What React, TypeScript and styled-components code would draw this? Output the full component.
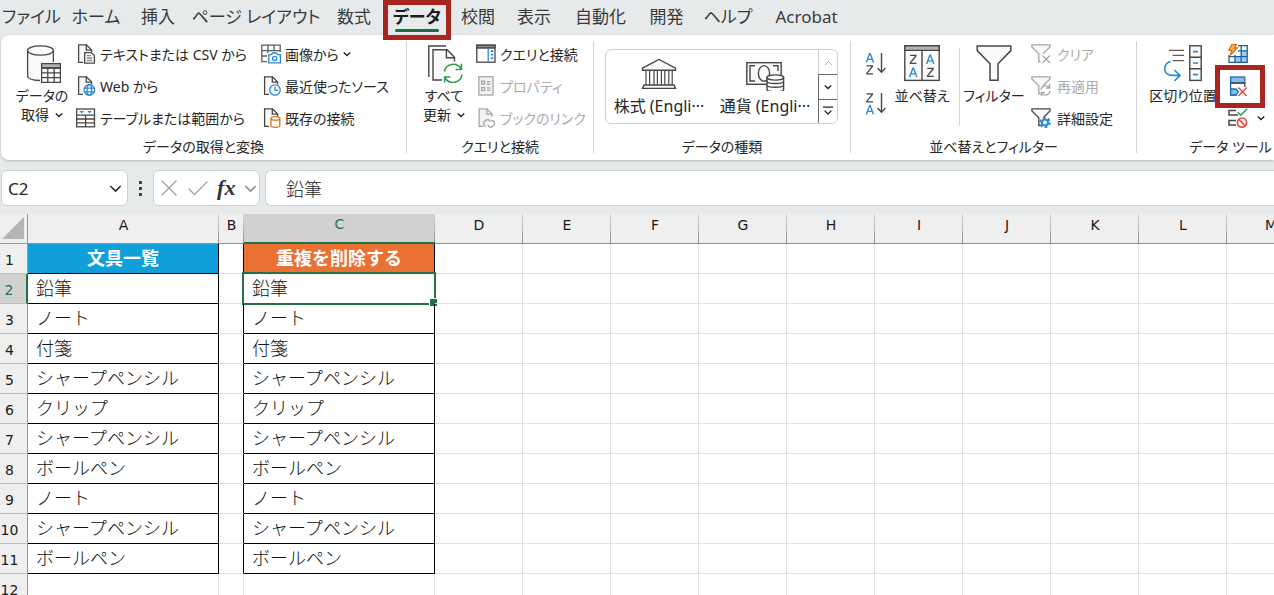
import React from "react";
import styled, { createGlobalStyle, css } from "styled-components";

const uiFont = `"Noto Sans", "Noto Sans CJK JP", sans-serif`;
const ink = "#262626";
const green = "#217346";
const red = "#a9251f";

const GlobalStyle = createGlobalStyle`
  * { box-sizing: border-box; }
  body {
    margin: 0;
    background: #e6eaeb;
    color: ${ink};
    font-family: ${uiFont};
    overflow: hidden;
  }
  button, input {
    font: inherit;
    color: inherit;
    background: none;
    border: 0;
    margin: 0;
    padding: 0;
  }
  svg { display: block; flex: none; }
`;

const Window = styled.div`
  display: flex;
  flex-direction: column;
  width: 100%;
  height: 100vh;
  overflow: hidden;
`;

/* ---------- tabs ---------- */

const TabBar = styled.nav`
  display: flex;
  height: 35px;
  flex: none;
  font-feature-settings: "palt";
`;

const Tab = styled.button<{ $width: number; $active?: boolean }>`
  position: relative;
  flex: 0 0 ${(p) => p.$width}px;
  height: 34px;
  font-size: 17px;
  line-height: 34px;
  white-space: nowrap;
  font-weight: ${(p) => (p.$active ? 700 : 400)};
  color: ${(p) => (p.$active ? "#1c1c1c" : "#3a3a3a")};
  ${(p) =>
    p.$active &&
    css`
      &::after {
        content: "";
        position: absolute;
        left: 12px;
        right: 12px;
        bottom: 2px;
        height: 3px;
        border-radius: 2px;
        background: #127245;
      }
    `}
`;

/* Red frame drawn over a control that the tutorial points at. */
const Highlight = styled.span<{ $inset: string }>`
  position: absolute;
  z-index: 2;
  inset: ${(p) => p.$inset};
  border: 5px solid ${red};
  pointer-events: none;
`;

/* ---------- ribbon ---------- */

const Ribbon = styled.section`
  display: flex;
  flex: none;
  height: 125px;
  margin-left: 1px;
  padding-top: 4px;
  background: #fff;
  border-radius: 8px 0 0 8px;
  box-shadow: 0 1px 3px rgba(0, 0, 0, 0.22);
`;

const Group = styled.div<{ $width: number }>`
  display: flex;
  flex-direction: column;
  flex: 0 0 ${(p) => p.$width}px;
`;

const GroupBody = styled.div<{ $indent: number }>`
  display: flex;
  height: 96px;
  padding-left: ${(p) => p.$indent}px;
`;

const GroupLabel = styled.div`
  height: 24px;
  font-size: 14px;
  line-height: 24px;
  text-align: center;
  white-space: nowrap;
  font-feature-settings: "palt";
`;

const Divider = styled.div`
  flex: 0 0 1px;
  margin: 2px 0 7px;
  background: #d4d4d4;
`;

const InnerDivider = styled(Divider)`
  margin: 9px 4px 9px 3px;
`;

const BigButton = styled.button<{ $width: number }>`
  display: flex;
  flex-direction: column;
  align-items: center;
  gap: 3px;
  flex: 0 0 ${(p) => p.$width}px;
  min-width: 0;
  padding-top: 6px;
  font-size: 14px;
  line-height: 19px;
  white-space: nowrap;
  font-feature-settings: "palt";
`;

const BigLabel = styled.span`
  display: flex;
  flex-direction: column;
  align-items: center;
`;

const WithChevron = styled.span`
  display: flex;
  align-items: center;
  gap: 6px;
`;

const CommandList = styled.div<{ $width?: number; $indent?: number }>`
  display: flex;
  flex-direction: column;
  align-items: flex-start;
  flex: 0 0 ${(p) => (p.$width ? p.$width + "px" : "auto")};
  padding-left: ${(p) => p.$indent ?? 0}px;
`;

const Command = styled.button<{ $gap?: number }>`
  position: relative;
  display: flex;
  align-items: center;
  gap: ${(p) => p.$gap ?? 4}px;
  height: 32px;
  padding-bottom: 2px;
  font-size: 14px;
  white-space: nowrap;
  font-feature-settings: "palt";
  &:disabled {
    color: #ababab;
  }
`;

const SortColumn = styled.div`
  display: flex;
  flex-direction: column;
  align-items: center;
  flex: 0 0 24px;
  gap: 16px;
  padding-top: 13px;
`;

const Gallery = styled.div`
  display: flex;
  flex: 0 0 233px;
  height: 75px;
  margin-top: 10px;
  border: 1px solid #cfcfcf;
  border-radius: 6px;
  overflow: hidden;
`;

const GalleryItem = styled.button`
  display: flex;
  flex-direction: column;
  align-items: center;
  gap: 3px;
  flex: 0 0 106px;
  min-width: 0;
  padding-top: 7px;
  font-size: 16px;
  line-height: 24px;
  white-space: nowrap;
`;

const Spinner = styled.div`
  display: flex;
  flex-direction: column;
  flex: 1;
`;

const SpinButton = styled.button`
  display: flex;
  align-items: center;
  justify-content: center;
  flex: 1;
  border: 1px solid #6b6b6b;
  margin: 0 -1px -1px 0;
  &:disabled {
    border-color: #cfcfcf;
    border-top-color: transparent;
  }
`;

/* ---------- formula bar ---------- */

const FormulaBar = styled.div`
  display: flex;
  flex: none;
  height: 36px;
  margin: 10px 0 8px 1px;
`;

const Field = styled.div`
  display: flex;
  align-items: center;
  min-width: 0;
  background: #fff;
  border: 1px solid #cdd0d1;
  border-radius: 6px;
`;

const NameBox = styled(Field)`
  flex: 0 0 127px;
  padding: 0 5px 0 6px;
`;

const NameInput = styled.input`
  flex: 1;
  width: 0;
  min-width: 0;
  font-size: 17px;
  outline: none;
`;

const Dots = styled.div`
  display: flex;
  flex-direction: column;
  align-items: center;
  justify-content: center;
  gap: 3px;
  flex: 0 0 25px;
`;

const Dot = styled.i`
  width: 3px;
  height: 3px;
  background: #444;
`;

const FxBox = styled(Field)`
  flex: 0 0 107px;
  justify-content: space-between;
  padding: 0 2px 0 6px;
  margin-right: 5px;
`;

const FxButton = styled.button`
  font: italic 700 22px "Liberation Serif", serif;
  line-height: 30px;
  color: #333;
`;

const FormulaField = styled(Field)`
  flex: 1;
  border-right: 0;
  border-radius: 6px 0 0 6px;
`;

const FormulaInput = styled.input`
  width: 100%;
  padding: 0 20px;
  font: 300 18px "Noto Sans CJK JP", sans-serif;
  line-height: 26px;
  outline: none;
`;

/* ---------- sheet ---------- */

const Sheet = styled.main`
  flex: 1;
  min-height: 0;
  overflow: hidden;
  background: #fff;
`;

const Table = styled.table`
  width: 0;
  table-layout: fixed;
  border-spacing: 0;
  border-collapse: separate;
`;

const Col = styled.col<{ $width: number }>`
  width: ${(p) => p.$width}px;
`;

const Corner = styled.td`
  height: 30px;
  padding: 0 3px 4px 0;
  background: #efefef;
  border-right: 1px solid #999;
  border-bottom: 1px solid #999;
  vertical-align: bottom;
  svg { margin-left: auto; }
`;

const ColumnHead = styled.th<{ $selected?: boolean }>`
  height: 30px;
  padding: 0 0 8px;
  font: 400 14px "DejaVu Sans", sans-serif;
  color: ${(p) => (p.$selected ? green : "#1a1a1a")};
  background: linear-gradient(#d8d8d8, #8f8f8f) right / 1px 100% no-repeat,
    ${(p) => (p.$selected ? "#d1d1d1" : "#efefef")};
  border-bottom: ${(p) => (p.$selected ? `2px solid ${green}` : "1px solid #8f8f8f")};
`;

const RowHead = styled.th<{ $selected?: boolean }>`
  height: 30px;
  padding: 2px 8px 0 0;
  font: 400 14px "DejaVu Sans", sans-serif;
  color: ${(p) => (p.$selected ? green : "#1a1a1a")};
  background: ${(p) => (p.$selected ? "#d1d1d1" : "#efefef")};
  border-bottom: 1px solid #bdbdbd;
  border-right: ${(p) => (p.$selected ? `2px solid ${green}` : "1px solid #999")};
`;

const Cell = styled.td<{ $right?: boolean; $bottom?: boolean; $fill?: string }>`
  position: relative;
  height: 30px;
  padding: 0 0 3px 8px;
  font: 300 18px "Noto Sans CJK JP", sans-serif;
  line-height: 26px;
  white-space: nowrap;
  color: #111;
  border-right: 1px solid ${(p) => (p.$right ? "#000" : "#e1e1e1")};
  border-bottom: 1px solid ${(p) => (p.$bottom ? "#000" : "#e1e1e1")};
  ${(p) =>
    p.$fill &&
    css`
      padding-left: 0;
      text-align: center;
      font-weight: 700;
      color: #fff;
      background: ${p.$fill};
    `}
`;

const Selection = styled.span`
  position: absolute;
  inset: -2px;
  border: 2px solid ${green};
  &::after {
    content: "";
    position: absolute;
    right: -4px;
    bottom: -4px;
    width: 7px;
    height: 7px;
    background: ${green};
    border: 1px solid #fff;
  }
`;

/* ---------- icons ---------- */

const g = "#484644";
const blue = "#2b88d8";

const Chevron = ({ size = 8, color = ink, w = 1.4 }: { size?: number; color?: string; w?: number }) => (
  <svg width={size} height={size} viewBox="0 0 8 8" fill="none" stroke={color} strokeWidth={w}>
    <path d="M0.8 2.4 4 5.6 7.2 2.4" />
  </svg>
);

const Small = ({ children }: { children: React.ReactNode }) => (
  <svg width="20" height="20" viewBox="0 0 20 20" fill="none" stroke={g} strokeWidth="1.3">
    {children}
  </svg>
);

const Page = ({ color = g, fill = "#fafafa" }: { color?: string; fill?: string }) => (
  <>
    <path d="M7 18.3H2.6V.8H10.5L15.6 6V8.5" fill={fill} stroke={color} />
    <path d="M10.3.8V6.2H15.6" stroke={color} />
  </>
);

const DatabaseIcon = () => (
  <svg width="38" height="38" viewBox="0 0 38 38" fill="none" stroke={g} strokeWidth="1.3">
    <path d="M4.6 5.5V31c0 2.6 5 4.4 12 4.4V18H30.4V5.5" fill="#fafafa" stroke="none" />
    <path d="M4.6 5.5V31c0 2.4 4.6 4.2 12.4 4.5M30.4 5.5V17" />
    <ellipse cx="17.5" cy="5.5" rx="12.9" ry="4.7" fill="#fafafa" />
    <rect x="18.6" y="18.6" width="18.8" height="18.8" fill="#fff" />
    <path d="M18.6 18.6H37.4V23H18.6Z" fill="#b5b3b1" />
    <path d="M18.6 23H37.4M18.6 27.8H37.4M18.6 32.6H37.4M24.8 23V37.4M31.2 23V37.4" />
  </svg>
);

const TextIcon = () => (
  <Small>
    <Page />
    <path d="M8.7 8.6H15L18.4 11.5V19.2H8.7Z" fill="#fff" />
    <path d="M10.8 11.6H15M10.8 14H16.3M10.8 16.5H16.3" stroke="#8a8886" />
  </Small>
);

const WebIcon = () => (
  <Small>
    <Page />
    <circle cx="13.3" cy="14" r="5.3" fill="#fff" stroke={blue} />
    <ellipse cx="13.3" cy="14" rx="2.3" ry="5.3" stroke={blue} />
    <path d="M8.2 12.2H18.4M8.2 15.8H18.4" stroke={blue} />
  </Small>
);

const TableIcon = () => (
  <Small>
    <rect x=".7" y="1" width="17.8" height="17.8" fill="#fff" />
    <path d="M3.4 3H8L5.7 5.6ZM11.3 3H15.9L13.6 5.6Z" fill={blue} stroke="none" />
    <path d="M.7 7.2H18.5M.7 11H18.5M.7 14.9H18.5M9.6 7.2V18.8" />
  </Small>
);

const PictureIcon = () => (
  <Small>
    <path d="M19.2 8V1.2H.8V17.6H6M.8 6.6H19.2M.8 12H6M6.9 1.2V9M13.1 1.2V7.4" stroke="#605e5c" />
    <path d="M7.8 10.6H10.5L11.7 9H15.4L16.6 10.6H19.4V18.8H7.8Z" fill="#fff" stroke={blue} />
    <circle cx="13.6" cy="14.4" r="2.1" stroke={blue} />
  </Small>
);

const RecentIcon = () => (
  <Small>
    <g transform="translate(1 0)">
      <Page />
      <circle cx="13" cy="14" r="5.2" fill="#fff" stroke={blue} />
      <path d="M13 10.8V14.4H16" stroke={blue} />
    </g>
  </Small>
);

const ExistingIcon = () => (
  <Small>
    <g transform="translate(1 0)">
      <Page />
      <path d="M9 10.4V17.8c0 2 8.8 2 8.8 0V10.4" fill="#fff" stroke="#d8730f" />
      <ellipse cx="13.4" cy="10.4" rx="4.4" ry="1.8" fill="#fff" stroke="#d8730f" />
    </g>
  </Small>
);

const RefreshIcon = () => (
  <svg width="38" height="38" viewBox="0 0 38 38" fill="none" stroke={g} strokeWidth="1.4">
    <path d="M3.8 32V1H21" />
    <path d="M17 35H8V4.8H22L29.5 12.3V16.5" fill="#fafafa" />
    <path d="M21.4 4.8V12.8H30" />
    <g stroke="#2f9b4c" strokeWidth="1.5">
      <path d="M19.4 26.5A9 8.6 0 0 1 36 23.5M36.4 18.8V24.6H30.6" />
      <path d="M37 29.5A9 8.6 0 0 1 20.2 33M19.6 37.5V32H25.4" />
    </g>
  </svg>
);

const QueriesIcon = () => (
  <Small>
    <rect x=".8" y="1.2" width="18.2" height="17" fill="#fff" />
    <path d="M.8 1.2H19V4H.8Z" fill="#8a8886" />
    <path d="M12.2 4.6V17.6" stroke={blue} />
    <path d="M14.8 7H17.2M14.8 10.6H17.2M14.8 14.2H17.2" stroke={blue} strokeWidth="1.8" />
  </Small>
);

const PropertiesIcon = () => (
  <Small>
    <g stroke="#a6a6a6">
      <rect x="2.8" y=".8" width="14.2" height="18.2" fill="#f3f3f3" />
      <rect x="5.6" y="5.2" width="3" height="3" />
      <rect x="5.6" y="11.6" width="3" height="3" />
      <path d="M11 5.6H14.4M11 8H14.4M11 12H14.4M11 14.4H14.4" />
    </g>
  </Small>
);

const LinkIcon = () => (
  <Small>
    <g transform="translate(.5 0)">
      <Page color="#a6a6a6" fill="#f3f3f3" />
      <path
        d="M9.6 18.3a2.8 2.8 0 0 1-1.8-4.6l1.8-1.6c2-1.2 4 0 4.2 2M14.6 12.6a2.8 2.8 0 0 1 3 4.2l-1.8 1.8c-2 1.2-4.2 0-4.2-2"
        stroke="#a6a6a6"
      />
    </g>
  </Small>
);

const BankIcon = () => (
  <svg width="36" height="34" viewBox="0 0 36 34" fill="none" stroke={g} strokeWidth="1.4">
    <path d="M1.5 11.2 18 2.5 34.5 11.2V13.2H1.5Z" fill="#fafafa" />
    <path d="M5 13.2V28M8.6 13.2V28M13 13.2V28M16.4 13.2V28M20.4 13.2V28M23.8 13.2V28M27.8 13.2V28M31.2 13.2V28" strokeWidth="1.2" />
    <path d="M3 28H33L34.5 31.4H1.5Z" fill="#fafafa" />
  </svg>
);

const MoneyIcon = () => (
  <svg width="40" height="34" viewBox="0 0 40 34" fill="none" stroke={g} strokeWidth="1.4">
    <rect x="1.8" y="5.7" width="34.4" height="21.6" fill="#fafafa" />
    <path d="M10 8.8H5V24H10M28 8.8H33V14" />
    <ellipse cx="19" cy="16.4" rx="5.6" ry="7.8" />
    <path d="M22 20.5V32.5c0 3 16.6 3 16.6 0V20.5Z" fill="#fff" />
    <ellipse cx="30.3" cy="20.5" rx="8.3" ry="2.6" fill="#fff" />
    <path d="M22 24.3c0 3 16.6 3 16.6 0M22 28c0 3 16.6 3 16.6 0" />
  </svg>
);

const A = ({ x, y }: { x: number; y: number }) => (
  <path transform={`translate(${x} ${y})`} d="M.3 9.4 3.6.6H4.2L7.5 9.4M1.6 6.4H6.2" stroke={blue} strokeWidth="1.4" />
);
const Z = ({ x, y }: { x: number; y: number }) => (
  <path transform={`translate(${x} ${y})`} d="M.6.8H6.4V1.4L.9 8.2V8.8H7" stroke={g} strokeWidth="1.3" />
);

const SortIcon = ({ desc }: { desc?: boolean }) => (
  <svg width="22" height="24" viewBox="0 0 22 24" fill="none">
    {desc ? <Z x={1} y={1} /> : <A x={1} y={1} />}
    {desc ? <A x={1} y={13} /> : <Z x={1} y={13} />}
    <path d="M16.5 1V20M12.5 16 16.5 20.2 20.5 16" stroke={g} strokeWidth="1.4" />
  </svg>
);

const SortDialogIcon = () => (
  <svg width="36" height="38" viewBox="0 0 36 38" fill="none" stroke={g} strokeWidth="1.4">
    <rect x=".8" y=".8" width="34.4" height="34.6" fill="#fafafa" />
    <path d="M.8.8H35.2V5.4H.8Z" fill="#b5b3b1" />
    <path d="M18 5.4V35.4" />
    <Z x={5.5} y={9.5} />
    <A x={5.3} y={22.5} />
    <A x={22.3} y={9.5} />
    <Z x={22.7} y={22.5} />
  </svg>
);

const FunnelIcon = () => (
  <svg width="36" height="38" viewBox="0 0 36 38" fill="none" stroke={g} strokeWidth="1.5">
    <path d="M1.2 1H34.8V5.6L22 18.8V35.2H14V18.8L1.2 5.6Z" fill="#fafafa" />
  </svg>
);

const SmallFunnel = ({ color = g }: { color?: string }) => (
  <path d="M9.6 17.5H7.8V9.8L.9 3V.9H19V3L12.2 9.8" fill="#f8f8f8" stroke={color} />
);

const ClearIcon = () => (
  <Small>
    <SmallFunnel color="#a6a6a6" />
    <path d="M11.5 11.5 19 19M19 11.5 11.5 19" stroke="#a6a6a6" />
  </Small>
);

const ReapplyIcon = () => (
  <Small>
    <SmallFunnel color="#a6a6a6" />
    <path d="M10 13.5a4.8 4.6 0 0 1 8.4-2M18.6 8V12H14.8M19 15a4.8 4.6 0 0 1-8.2 2.6M10.4 20V16.6H14" stroke="#a6a6a6" />
  </Small>
);

const AdvancedIcon = () => (
  <Small>
    <SmallFunnel />
    <circle cx="14" cy="14.5" r="4.8" stroke={blue} strokeWidth="2" strokeDasharray="2.6 2.4" />
    <circle cx="14" cy="14.5" r="3" fill="#fff" stroke={blue} strokeWidth="2" />
  </Small>
);

const SplitIcon = () => (
  <svg width="40" height="38" viewBox="0 0 40 38" fill="none" stroke={g} strokeWidth="1.4">
    <path d="M6 5.4H21M9.5 10.4H21M9.5 15.6H21" stroke="#605e5c" />
    <path d="M7.6 16.4C-.5 19-.5 29.5 9 30.4H16M11.4 25 17 30.4 11.4 36" stroke={blue} strokeWidth="1.6" />
    <rect x="26.8" y=".8" width="11.4" height="34.6" fill="#fafafa" />
    <path d="M26.8 12.3H38.2M26.8 23.8H38.2" />
    <path d="M30 6.6H35M30 18H35M30 29.6H35" stroke={blue} strokeWidth="1.6" />
  </svg>
);

const FlashIcon = () => (
  <Small>
    <path d="M13 6.6H19.2V18.4H7V12.4H13Z" fill="#9fcdf3" stroke="none" />
    <path d="M10 6.8H19.2M1 12.6H19.2M7 11V18.4M13.2 1.6V18.4M10 1.6H19.2V18.4H1V11" stroke="#1f5f99" />
    <path d="M3.8.6H8.6L6.6 4H9.4L2.2 11.4 3.8 6.4H.8Z" fill="#f9b26a" stroke="#d8730f" />
  </Small>
);

const DuplicatesIcon = () => (
  <Small>
    <rect x="2.6" y="1" width="14.2" height="6" fill="#83bdf0" stroke="#1f6cb0" />
    <path d="M2.6 7V19H9" stroke="#1f5f99" />
    <path d="M2.6 7H16.8V11" stroke={g} />
    <path d="M2.6 13H8L10.4 15.6 8 19H2.6Z" fill="#83bdf0" stroke="#1f6cb0" />
    <path d="M10.4 11.6 18.6 20M18.6 11.6 10.4 20" stroke="#e8443a" strokeWidth="1.4" />
  </Small>
);

const ValidationIcon = () => (
  <Small>
    <path d="M8 2.6H1V7H10M8 12.6H1V17H8" strokeWidth="1.5" />
    <path d="M9.6 4 12.8 7.2 19.2.8" stroke="#2f9b4c" strokeWidth="1.6" />
    <circle cx="14" cy="14.6" r="4.6" stroke="#e8443a" strokeWidth="1.6" />
    <path d="M10.8 11.4 17.2 17.8" stroke="#e8443a" strokeWidth="1.6" />
  </Small>
);

/* ---------- data ---------- */

const tabs: [string, number][] = [
  ["ファイル", 63],
  ["ホーム", 66],
  ["挿入", 58],
  ["ページ レイアウト", 138],
  ["数式", 58],
  ["データ", 68],
  ["校閲", 54],
  ["表示", 58],
  ["自動化", 75],
  ["開発", 57],
  ["ヘルプ", 66],
  ["Acrobat", 91],
];

const columns: [string, number][] = [
  ["A", 191],
  ["B", 25],
  ["C", 191],
  ...["D", "E", "F", "G", "H", "I", "J", "K", "L", "M"].map((c): [string, number] => [c, 88]),
];

const items = [
  "",
  "鉛筆",
  "ノート",
  "付箋",
  "シャープペンシル",
  "クリップ",
  "シャープペンシル",
  "ボールペン",
  "ノート",
  "シャープペンシル",
  "ボールペン",
  "",
];

const SheetCell = ({ col, row }: { col: string; row: number }) => {
  const inList = row <= 11;
  const listed = col === "A" || col === "C";
  if (row === 1 && listed) {
    return (
      <Cell $right $bottom $fill={col === "A" ? "#119fd9" : "#e97132"}>
        {col === "A" ? "文具一覧" : "重複を削除する"}
      </Cell>
    );
  }
  return (
    <Cell $right={inList && (listed || col === "B")} $bottom={inList && listed}>
      {listed && items[row - 1]}
      {col === "C" && row === 2 && <Selection />}
    </Cell>
  );
};

export default function App() {
  return (
    <Window>
      <GlobalStyle />
      <TabBar aria-label="リボン">
        {tabs.map(([name, width]) => (
          <Tab key={name} $width={width} $active={name === "データ"}>
            {name}
            {name === "データ" && <Highlight $inset="0 0 -6px 0" />}
          </Tab>
        ))}
      </TabBar>

      <Ribbon>
        <Group $width={405}>
          <GroupBody $indent={11}>
            <BigButton $width={60}>
              <DatabaseIcon />
              <BigLabel>
                <span>データの</span>
                <WithChevron>取得<Chevron /></WithChevron>
              </BigLabel>
            </BigButton>
            <CommandList $width={189} $indent={4}>
              <Command><TextIcon />テキストまたは CSV から</Command>
              <Command><WebIcon />Web から</Command>
              <Command><TableIcon />テーブルまたは範囲から</Command>
            </CommandList>
            <CommandList>
              <Command><PictureIcon />画像から<Chevron /></Command>
              <Command><RecentIcon />最近使ったソース</Command>
              <Command><ExistingIcon />既存の接続</Command>
            </CommandList>
          </GroupBody>
          <GroupLabel>データの取得と変換</GroupLabel>
        </Group>
        <Divider />
        <Group $width={186}>
          <GroupBody $indent={7}>
            <BigButton $width={60}>
              <RefreshIcon />
              <BigLabel>
                <span>すべて</span>
                <WithChevron>更新<Chevron /></WithChevron>
              </BigLabel>
            </BigButton>
            <CommandList $indent={2}>
              <Command><QueriesIcon />クエリと接続</Command>
              <Command disabled><PropertiesIcon />プロパティ</Command>
              <Command disabled><LinkIcon />ブックのリンク</Command>
            </CommandList>
          </GroupBody>
          <GroupLabel>クエリと接続</GroupLabel>
        </Group>
        <Divider />
        <Group $width={256}>
          <GroupBody $indent={11}>
            <Gallery>
              <GalleryItem><BankIcon />株式 (Engli···</GalleryItem>
              <GalleryItem><MoneyIcon />通貨 (Engli···</GalleryItem>
              <Spinner>
                <SpinButton disabled aria-label="上へ">
                  <svg width="9" height="8" viewBox="0 0 9 8" fill="none" stroke="#b5b5b5"><path d="M1 6 4.5 2.5 8 6" /></svg>
                </SpinButton>
                <SpinButton aria-label="下へ"><Chevron /></SpinButton>
                <SpinButton aria-label="その他">
                  <svg width="10" height="10" viewBox="0 0 10 10" fill="none" stroke={ink} strokeWidth="1.3"><path d="M0 1.2H10M1.6 4.6 5 8 8.4 4.6" /></svg>
                </SpinButton>
              </Spinner>
            </Gallery>
          </GroupBody>
          <GroupLabel>データの種類</GroupLabel>
        </Group>
        <Divider />
        <Group $width={285}>
          <GroupBody $indent={13}>
            <SortColumn>
              <button aria-label="昇順"><SortIcon /></button>
              <button aria-label="降順"><SortIcon desc /></button>
            </SortColumn>
            <BigButton $width={68}>
              <SortDialogIcon />
              <BigLabel>並べ替え</BigLabel>
            </BigButton>
            <InnerDivider />
            <BigButton $width={60}>
              <FunnelIcon />
              <BigLabel>フィルター</BigLabel>
            </BigButton>
            <CommandList $indent={7}>
              <Command disabled $gap={6}><ClearIcon />クリア</Command>
              <Command disabled $gap={6}><ReapplyIcon />再適用</Command>
              <Command $gap={6}><AdvancedIcon />詳細設定</Command>
            </CommandList>
          </GroupBody>
          <GroupLabel>並べ替えとフィルター</GroupLabel>
        </Group>
        <Divider />
        <Group $width={187}>
          <GroupBody $indent={11}>
            <BigButton $width={70}>
              <SplitIcon />
              <BigLabel>区切り位置</BigLabel>
            </BigButton>
            <CommandList $indent={10}>
              <Command aria-label="フラッシュ フィル"><FlashIcon /></Command>
              <Command aria-label="重複の削除">
                <DuplicatesIcon />
                <Highlight $inset="-6px -17px -5px -13px" />
              </Command>
              <Command $gap={9} aria-label="データの入力規則"><ValidationIcon /><Chevron /></Command>
            </CommandList>
          </GroupBody>
          <GroupLabel>データ ツール</GroupLabel>
        </Group>
      </Ribbon>

      <FormulaBar>
        <NameBox>
          <NameInput aria-label="名前ボックス" defaultValue="C2" />
          <button aria-label="名前の一覧"><Chevron size={13} w={0.9} /></button>
        </NameBox>
        <Dots><Dot /><Dot /><Dot /></Dots>
        <FxBox>
          <button aria-label="キャンセル">
            <svg width="18" height="18" viewBox="0 0 18 18" stroke="#a0a0a0" strokeWidth="1.3"><path d="M1.5 1.5 16.5 16.5M16.5 1.5 1.5 16.5" /></svg>
          </button>
          <button aria-label="入力">
            <svg width="22" height="18" viewBox="0 0 22 18" fill="none" stroke="#a0a0a0" strokeWidth="1.3"><path d="M1.5 9.5 7.5 15.5 20.5 2.5" /></svg>
          </button>
          <FxButton aria-label="関数の挿入">fx</FxButton>
          <button aria-label="関数の一覧"><Chevron size={13} color="#8a8a8a" w={0.9} /></button>
        </FxBox>
        <FormulaField>
          <FormulaInput aria-label="数式バー" defaultValue="鉛筆" />
        </FormulaField>
      </FormulaBar>

      <Sheet>
        <Table>
          <colgroup>
            <Col $width={28} />
            {columns.map(([c, w]) => <Col key={c} $width={w} />)}
          </colgroup>
          <thead>
            <tr>
              <Corner>
                <svg width="22" height="22" viewBox="0 0 22 22"><path d="M22 0V22H0Z" fill="#b5b5b5" /></svg>
              </Corner>
              {columns.map(([c]) => <ColumnHead key={c} scope="col" $selected={c === "C"}>{c}</ColumnHead>)}
            </tr>
          </thead>
          <tbody>
            {items.map((_, i) => (
              <tr key={i}>
                <RowHead scope="row" $selected={i === 1}>{i + 1}</RowHead>
                {columns.map(([c]) => <SheetCell key={c} col={c} row={i + 1} />)}
              </tr>
            ))}
          </tbody>
        </Table>
      </Sheet>
    </Window>
  );
}
